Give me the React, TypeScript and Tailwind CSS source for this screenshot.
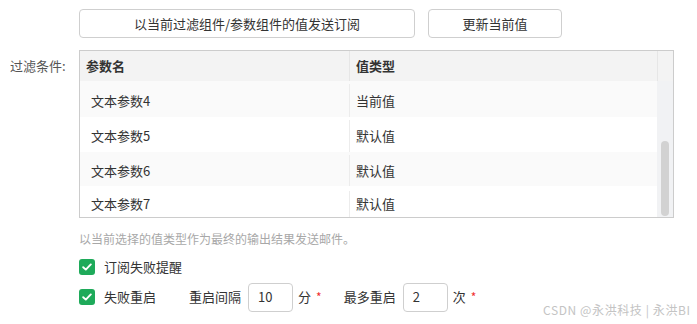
import React from "react";

const font = { fontFamily: '"Noto Sans CJK SC", "Noto Sans", sans-serif' };

function Check() {
  return (
    <span className="flex h-[16px] w-[16px] items-center justify-center rounded-[3px] bg-[#1eaa5a]">
      <svg width="10" height="8" viewBox="0 0 10 8" fill="none">
        <path d="M1.2 4.2 L3.8 6.6 L8.8 1.4" stroke="white" strokeWidth="1.9" strokeLinecap="round" strokeLinejoin="round" />
      </svg>
    </span>
  );
}

const rows = [
  { name: "文本参数4", type: "当前值", h: "h-[36px]", bg: "bg-[#fafafa]", pt: "pt-[3px]" },
  { name: "文本参数5", type: "默认值", h: "h-[35px]", bg: "bg-white", pt: "pt-[3px]" },
  { name: "文本参数6", type: "默认值", h: "h-[34px]", bg: "bg-[#fafafa]", pt: "pt-[3px]" },
  { name: "文本参数7", type: "默认值", h: "h-[31px]", bg: "bg-white", pt: "pt-[5px]" },
];

export default function App() {
  return (
    <div className="relative h-[324px] w-[697px] overflow-hidden bg-white text-[13px] text-[#333]" style={font}>
      <div className="flex gap-[13px] pl-[79px] pt-[9px]">
        <button className="h-[29px] w-[336px] rounded-[4px] border border-[#cfcfcf] bg-white text-[13px] text-[#333]">
          以当前过滤组件/参数组件的值发送订阅
        </button>
        <button className="h-[29px] w-[134px] rounded-[4px] border border-[#cfcfcf] bg-white text-[13px] text-[#333]">
          更新当前值
        </button>
      </div>

      <div className="mt-[12px] flex">
        <div className="w-[79px] pl-[10px] pt-[6px] text-[13px] text-[#555]">过滤条件:</div>
        <div className="flex h-[168px] w-[595px] flex-col border border-[#cccccc]">
          <div className="flex h-[30px] shrink-0 bg-[#f3f3f3]">
            <div className="flex w-[270px] items-center border-r border-[#e6e6e6] pl-[6px] font-semibold">参数名</div>
            <div className="flex w-[307px] items-center pl-[6px] font-semibold">值类型</div>
            <div className="flex-1 border-l border-[#e6e6e6]"></div>
          </div>
          <div className="flex flex-1 overflow-hidden">
            <div className="flex w-[577px] flex-col">
              {rows.map((r) => (
                <div key={r.name} className={`flex ${r.h} ${r.bg} ${r.pt} shrink-0`}>
                  <div className="flex w-[270px] items-center border-r border-[#ececec] pl-[11px]">{r.name}</div>
                  <div className="flex flex-1 items-center pl-[6px]">{r.type}</div>
                </div>
              ))}
            </div>
            <div className="flex flex-1 flex-col bg-[#f1f2f4] px-[4px] pt-[60px] pb-[1px]">
              <div className="flex-1 rounded-full bg-[#d2d2d2]"></div>
            </div>
          </div>
        </div>
      </div>

      <div className="pl-[79px] pt-[12px] text-[12px] text-[#a8a8a8]">以当前选择的值类型作为最终的输出结果发送邮件。</div>

      <div className="flex items-center gap-[9px] pl-[79px] pt-[9px]">
        <Check />
        <span>订阅失败提醒</span>
      </div>

      <div className="flex items-center pl-[79px] pt-[6px]">
        <Check />
        <span className="ml-[9px]">失败重启</span>
        <span className="ml-[33px]">重启间隔</span>
        <div className="ml-[7px] flex h-[29px] w-[45px] items-center rounded-[4px] border border-[#cfcfcf] pl-[9px]">10</div>
        <span className="ml-[5px]">分</span>
        <span className="ml-[5px] text-[12px] text-[#f03030]">*</span>
        <span className="ml-[22px]">最多重启</span>
        <div className="ml-[7px] flex h-[29px] w-[45px] items-center rounded-[4px] border border-[#cfcfcf] pl-[9px]">2</div>
        <span className="ml-[5px]">次</span>
        <span className="ml-[5px] text-[12px] text-[#f03030]">*</span>
      </div>

      <div className="absolute left-[543px] top-[301px] text-[12px] tracking-[0.6px] text-[#c4c4c4]">CSDN @永洪科技 | 永洪BI</div>
    </div>
  );
}
